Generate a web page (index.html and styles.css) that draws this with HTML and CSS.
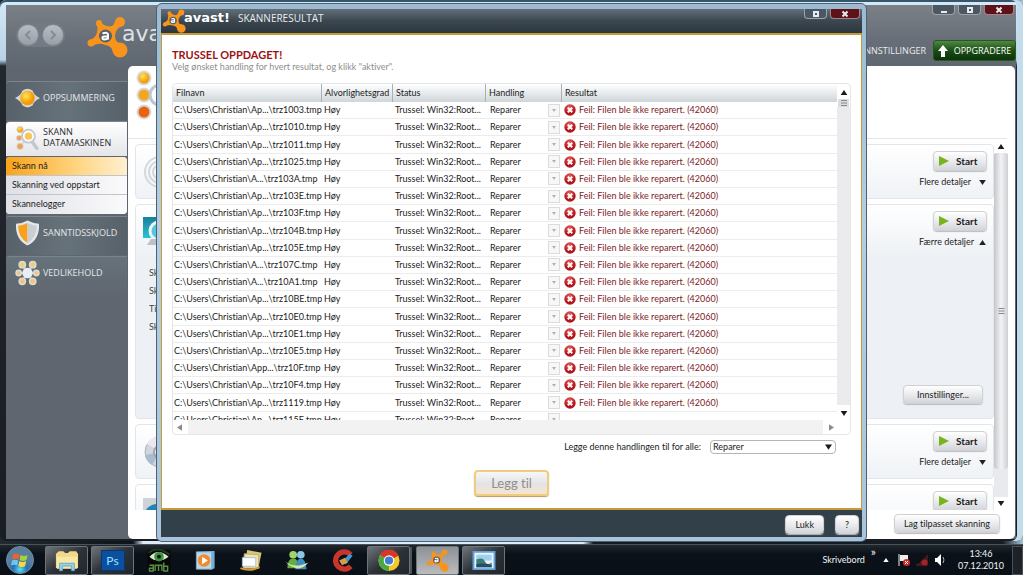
FILE: index.html
```
<!DOCTYPE html>
<html lang="no">
<head>
<meta charset="utf-8">
<title>avast! Skanneresultat</title>
<link rel="stylesheet" href="styles.css">
</head>
<body>
<svg class="defs" aria-hidden="true">
  <defs>
    <radialGradient id="gold" cx="40%" cy="35%"><stop offset="0" stop-color="#ffe45c"/><stop offset="1" stop-color="#f59a00"/></radialGradient>
    <radialGradient id="orb" cx="50%" cy="85%"><stop offset="0" stop-color="#5fe0f5"/><stop offset=".5" stop-color="#2474b4"/><stop offset="1" stop-color="#5a7f9c"/></radialGradient>
    <linearGradient id="lens" x2="0" y2="1"><stop offset="0" stop-color="#19809a"/><stop offset="1" stop-color="#2bc3d6"/></linearGradient>
    <radialGradient id="alert" cx="45%" cy="30%"><stop offset="0" stop-color="#ee6a66"/><stop offset="1" stop-color="#b3151c"/></radialGradient>
  </defs>
  <symbol id="splat" viewBox="0 0 42 42">
    <g fill="#f7941d">
      <circle cx="33" cy="6" r="5"/><circle cx="12" cy="7" r="3"/><circle cx="4" cy="27" r="3.500"/><circle cx="33" cy="34" r="7.500"/>
      <path d="M28 5Q27 12 20 10Q15 9 14 5L9 8Q12 13 9 19Q7 23 2 24L4 30.500Q11 26 18 29Q25 30 26 36L38 28.500Q28 28 28 20Q28 12 37 9Z"/>
    </g>
    <circle cx="18.500" cy="20" r="6.500" fill="#596069"/>
    <path d="M15.500 17.500q5.500-2 5.500 1.500v4.500m0-3h-3.500q-2.500 0-2 2t5.500 0" fill="none" stroke="#fff" stroke-width="2"/>
  </symbol>
  <symbol id="scan" viewBox="0 0 26 28">
    <path d="M5 5L13 13L5 23M4 14h9" stroke="#d8d9dc" stroke-width="2" fill="none"/>
    <g stroke="#ddd8cd"><circle cx="5" cy="5" r="3.500" fill="url(#gold)"/><circle cx="4" cy="14" r="3" fill="#eaa25e"/><circle cx="5" cy="23" r="3.500" fill="#eaa25e"/></g>
    <path d="M18 18l5 7" stroke="#c4c8ce" stroke-width="4" stroke-linecap="round"/>
    <circle cx="14" cy="12" r="7" fill="#fff" stroke="#c4c8ce" stroke-width="2"/><circle cx="14" cy="12" r="4" fill="#f7c75c"/>
  </symbol>
  <symbol id="error" viewBox="0 0 12 12"><circle cx="6" cy="6" r="5.700" fill="url(#alert)"/><path d="M3.800 3.800l4.400 4.400m0-4.400L3.800 8.200" stroke="#fff" stroke-width="2"/></symbol>
  <symbol id="play" viewBox="0 0 10 10"><path d="M0 0L10 5L0 10Z" fill="#78b41e"/></symbol>
  <symbol id="down" viewBox="0 0 8 6"><path d="M0 0H8L4 6Z" fill="currentColor"/></symbol>
  <symbol id="up" viewBox="0 0 8 6"><path d="M0 6H8L4 0Z" fill="currentColor"/></symbol>
  <symbol id="left" viewBox="0 0 6 8"><path d="M6 0V8L0 4Z" fill="currentColor"/></symbol>
  <symbol id="right" viewBox="0 0 6 8"><path d="M0 0V8L6 4Z" fill="currentColor"/></symbol>
  <symbol id="grip" viewBox="0 0 6 6"><path d="M0 .5H6M0 3H6M0 5.500H6" stroke="#888"/></symbol>
</svg>

<main class="desktop">
  <section class="app" aria-label="avast!">
    <header class="app-header">
      <div class="nav">
        <button class="nav-button" aria-label="Tilbake"><svg viewBox="0 0 10 10"><path d="M7 1L3 5l4 4"/></svg></button>
        <button class="nav-button" aria-label="Frem"><svg viewBox="0 0 10 10"><path d="M3 1l4 4-4 4"/></svg></button>
      </div>
      <svg class="brand-logo"><use href="#splat"/></svg>
      <span class="brand">avast!</span>
      <div class="app-tools">
        <div class="caption-buttons">
          <button class="caption" aria-label="Minimer"><svg viewBox="0 0 8 8"><path d="M1 6h6"/></svg></button>
          <button class="caption" aria-label="Maksimer"><svg viewBox="0 0 8 8"><path d="M2 2h4v4H2z"/></svg></button>
          <button class="caption close" aria-label="Lukk vindu"><svg viewBox="0 0 8 8"><path d="M1.500 1.500l5 5m0-5l-5 5"/></svg></button>
        </div>
        <div class="app-links">
          <a href="#">INNSTILLINGER</a>
          <button class="upgrade"><svg viewBox="0 0 10 12"><path d="M5 0L10 6H7v6H3V6H0Z" fill="#fff"/></svg>OPPGRADERE</button>
        </div>
      </div>
    </header>
    <div class="app-body">
      <nav class="sidebar">
        <a class="side-item" href="#"><svg viewBox="0 0 24 18"><path d="M0 9Q6 6 7 2Q12-2 17 2Q18 6 24 9Q18 12 17 16Q12 20 7 16Q6 12 0 9Z" fill="#d4d7d9"/><circle cx="12" cy="9" r="7" fill="url(#gold)"/></svg>OPPSUMMERING</a>
        <a class="side-item active" href="#"><svg><use href="#scan"/></svg>SKANN<br>DATAMASKINEN</a>
        <div class="submenu">
          <a class="current" href="#">Skann nå</a>
          <a href="#">Skanning ved oppstart</a>
          <a href="#">Skannelogger</a>
        </div>
        <a class="side-item" href="#"><svg viewBox="0 0 24 24"><path d="M12 0Q18 3 23 3Q24 18 12 24Q0 18 1 3Q7 3 12 0Z" fill="#e4e6e8"/><path d="M12 2.500Q7 5 3 5Q3 16 12 21.500Z" fill="#f9a11b"/><path d="M12 2.500Q17 5 21 5Q21 16 12 21.500Z" fill="#c9ced3"/></svg>SANNTIDSSKJOLD</a>
        <a class="side-item last" href="#"><svg viewBox="0 0 24 24"><path d="M7 4l10 16M17 4L7 20M3 12h18" stroke="#c7c4bb" stroke-width="2"/><g fill="#f3c27c" stroke="#dedad0" stroke-width="1.500"><circle cx="7" cy="4" r="3" fill="#e9d27a"/><circle cx="17" cy="4" r="3" fill="#e9d27a"/><circle cx="3.500" cy="12" r="2.500"/><circle cx="20.500" cy="12" r="2.500"/><circle cx="7" cy="20" r="3"/><circle cx="17" cy="20" r="3"/></g><circle cx="12" cy="12" r="5" fill="#e8eef6"/></svg>VEDLIKEHOLD</a>
      </nav>
      <div class="panel">
        <div class="panel-top">
          <svg viewBox="0 0 34 50"><g stroke="#d6d9de" stroke-width="2"><circle cx="8" cy="8" r="6.500" fill="url(#gold)"/><circle cx="8" cy="25" r="6.500" fill="#f4a71e"/><circle cx="8" cy="42" r="6.500" fill="#e8640c"/></g><circle cx="24" cy="25" r="10" fill="#fff" stroke="#bcc6d4" stroke-width="3"/></svg>
        </div>
        <div class="panel-main">
          <div class="cards">
            <article class="card short">
              <svg class="card-icon" viewBox="0 0 34 34"><g fill="none" stroke="#d4d8dc" stroke-width="2"><circle cx="17" cy="17" r="15"/><circle cx="17" cy="17" r="11"/><circle cx="17" cy="17" r="7"/></g></svg>
              <div class="card-actions"><button class="button start"><svg><use href="#play"/></svg>Start</button><a href="#">Flere detaljer <svg><use href="#down"/></svg></a></div>
            </article>
            <article class="card open">
              <svg class="card-icon" viewBox="0 0 34 34"><path d="M0 2H30V23H0Z" fill="url(#lens)"/><circle cx="16" cy="16" r="9" fill="#56c7dc" stroke="#eef3f6" stroke-width="3"/><path d="M8 24h18l4 6H4z" fill="#b9c2ca"/></svg>
              <div class="card-facts"><span>Sk</span><span>Sk</span><span>Ti</span><span>Sk</span></div>
              <div class="card-actions"><button class="button start"><svg><use href="#play"/></svg>Start</button><a class="less" href="#">Færre detaljer <svg><use href="#up"/></svg></a></div>
              <button class="button settings">Innstillinger...</button>
            </article>
            <article class="card short">
              <svg class="card-icon" viewBox="0 0 34 34"><circle cx="17" cy="17" r="15" fill="#cfd6dd" stroke="#aab3bd"/><path d="M17 17L4 9A15 15 0 0 1 13 2Z" fill="#f0e6ee"/><path d="M17 17L2 20A15 15 0 0 0 9 30Z" fill="#a9bccb"/><circle cx="17" cy="17" r="6" fill="#eef1f4" stroke="#a59fb5" stroke-width="2"/></svg>
              <div class="card-actions"><button class="button start"><svg><use href="#play"/></svg>Start</button><a href="#">Flere detaljer <svg><use href="#down"/></svg></a></div>
            </article>
            <article class="card cut">
              <svg class="card-icon" viewBox="0 0 34 34"><path d="M0 3H24V30H0Z" fill="#cfd3d7"/><circle cx="14" cy="22" r="13" fill="#1d88b0"/><circle cx="17" cy="23" r="8" fill="#d4f0f7"/></svg>
              <div class="card-actions"><button class="button start"><svg><use href="#play"/></svg>Start</button></div>
            </article>
          </div>
          <div class="scrollbar">
            <svg class="tip"><use href="#up"/></svg>
            <div class="thumb"><svg><use href="#grip"/></svg></div>
            <div class="rest"></div>
            <svg class="tip"><use href="#down"/></svg>
          </div>
        </div>
        <footer class="panel-footer"><button class="button">Lag tilpasset skanning</button></footer>
      </div>
    </div>
  </section>

  <section class="dialog" role="dialog" aria-labelledby="dialog-title">
    <header class="dialog-header">
      <svg class="dialog-logo"><use href="#splat"/></svg>
      <span class="dialog-brand">avast!</span>
      <h1 id="dialog-title">SKANNERESULTAT</h1>
      <div class="caption-buttons">
        <button class="caption" aria-label="Maksimer"><svg viewBox="0 0 8 8"><path d="M2 2h4v4H2z"/></svg></button>
        <button class="caption close" aria-label="Lukk dialog"><svg viewBox="0 0 8 8"><path d="M1.500 1.500l5 5m0-5l-5 5"/></svg></button>
      </div>
    </header>
    <div class="dialog-body">
      <h2>TRUSSEL OPPDAGET!</h2>
      <p class="hint">Velg ønsket handling for hvert resultat, og klikk "aktiver".</p>
      <div class="results">
        <div class="results-view">
          <table>
            <colgroup><col class="c-file"><col class="c-risk"><col class="c-status"><col class="c-action"><col></colgroup>
            <thead><tr><th>Filnavn</th><th>Alvorlighetsgrad</th><th>Status</th><th>Handling</th><th>Resultat</th></tr></thead>
            <tbody id="rows"></tbody>
          </table>
        </div>
        <div class="v-scroll">
          <svg class="tip"><use href="#up"/></svg>
          <div class="mini-thumb"><svg><use href="#grip"/></svg></div>
          <div class="rest"></div>
          <svg class="tip"><use href="#down"/></svg>
        </div>
        <div class="h-scroll"><svg><use href="#left"/></svg><div></div><svg><use href="#right"/></svg></div>
      </div>
      <div class="apply-all">
        <label for="all">Legge denne handlingen til for alle:</label>
        <span class="picker"><select id="all"><option>Reparer</option></select><svg><use href="#down"/></svg></span>
      </div>
      <button class="apply" disabled>Legg til</button>
    </div>
    <footer class="dialog-footer"><button class="button">Lukk</button><button class="button">?</button></footer>
  </section>
</main>

<footer class="taskbar">
  <button class="orb" aria-label="Start"><svg viewBox="0 0 28 28"><circle cx="14" cy="14" r="13.500" fill="url(#orb)" stroke="#6f8da3"/><path d="M7 8.500Q10 6.500 13.500 8.500L12.500 13.500Q9.500 12 6 13.500Z" fill="#f0602c"/><path d="M14.500 9Q18 11 21.500 9L20.500 14Q17 16 13.500 14Z" fill="#a6d23c"/><path d="M6 14.500Q9 13 12.300 14.500L11.300 19.500Q8 18 5 19.500Z" fill="#6fc4f0"/><path d="M13.300 15Q17 17 20.200 15L19.200 20Q16 22 12.300 20Z" fill="#ffd63d"/></svg></button>
  <div class="tasks">
    <button class="task open" aria-label="Utforsker"><svg viewBox="0 0 26 24"><path d="M1 5l3-3h5l2 2h3l2-2h7l2 3v15H1z" fill="#f3d985"/><path d="M2 8h22v13H2z" fill="#f8e7a5"/><path d="M5 15h16v8h-3v-5H8v5H5z" fill="#9bd0ea" stroke="#5fa7cc"/></svg></button>
    <button class="task open ps"><span>Ps</span></button>
    <button class="task" aria-label="AMB"><svg viewBox="0 0 24 24"><path d="M0 1h24v23H0z" fill="#060907"/><path d="M2 8Q11-2 22 8Q11 16 2 8Z" fill="#d8e8c8"/><circle cx="12" cy="8" r="5" fill="#3f9142"/><circle cx="12" cy="8" r="2" fill="#051005"/><path d="M1 4Q11-4 23 6" fill="none" stroke="#223822" stroke-width="2"/><path d="M2 17h4v6H2v-3h4M8 23v-6h7v6m-3.500 0v-6M17 14v9h4v-5h-4" fill="none" stroke="#5b8d46" stroke-width="1.500"/></svg></button>
    <button class="task" aria-label="Media Player"><svg viewBox="0 0 24 24"><path d="M5 2h17v18l-4 2V3z" fill="#6fb1da"/><path d="M3 3h16v18H3z" fill="#b8d9ec" stroke="#87aac0"/><circle cx="11" cy="12" r="6.500" fill="#ef8a2e"/><path d="M9 8l6 4-6 4z" fill="#fff"/></svg></button>
    <button class="task" aria-label="E-post"><svg viewBox="0 0 24 24"><path d="M8 1l15 3-3 14-14-3z" fill="#d8c774"/><path d="M5 5l15 1v14H4z" fill="#eee4b7" stroke="#c0ab6b"/><path d="M3 9h14v9H3z" fill="#fff" stroke="#a9c0d5"/><path d="M1 20q9 4 20-1" stroke="#d9982c" stroke-width="2" fill="none"/></svg></button>
    <button class="task" aria-label="Messenger"><svg viewBox="0 0 24 24"><circle cx="8" cy="6" r="4" fill="#a4d36a"/><path d="M2 20q0-10 6-10t6 10z" fill="#65ad43"/><circle cx="16" cy="6" r="4" fill="#8ac6ea"/><path d="M10 21q1-11 6-11t6 11z" fill="#3c8fc4"/><path d="M0 13q9 8 24 1-8 9-15 5Q4 18 0 13Z" fill="#dde5a4"/></svg></button>
    <button class="task" aria-label="CCleaner"><svg viewBox="0 0 24 24"><path d="M20 6A9 9 0 1 0 20 18" fill="none" stroke="#c9352b" stroke-width="5.500"/><path d="M11 13l8-8 3 2-7 9z" fill="#3e9ad3"/><path d="M8 12l6-3 3 5-6 3z" fill="#d99b44"/></svg></button>
    <button class="task open stacked" aria-label="Chrome"><svg viewBox="0 0 24 24"><circle cx="12" cy="12" r="11" fill="#f6c928"/><path d="M12 12L2.500 6.500A11 11 0 0 1 22 7Z" fill="#d93627"/><path d="M12 12L2.500 6.500A11 11 0 0 0 12 23Z" fill="#4da744"/><circle cx="12" cy="12" r="5.500" fill="#fff"/><circle cx="12" cy="12" r="4.300" fill="#3c7fd0"/></svg></button>
    <button class="task open bright" aria-label="avast!"><svg><use href="#splat"/></svg></button>
    <button class="task open" aria-label="Bilder"><svg viewBox="0 0 24 24"><path d="M1 3h22v18H1z" fill="#e8f2f8" stroke="#5fa0d8" stroke-width="2"/><path d="M4 6h16v6H4z" fill="#9fd0ef"/><path d="M4 11q7-3 9 2t7 1v5H4z" fill="#397c75"/><path d="M4 16q8-2 16 1v2H4z" fill="#234d6b"/></svg></button>
  </div>
  <div class="tray">
    <span class="toolbar-name">Skrivebord</span><span class="more">»</span>
    <svg class="tray-up" viewBox="0 0 8 6"><path d="M0 6H8L4 0Z" fill="#fff"/></svg>
    <svg viewBox="0 0 12 12"><path d="M1 0v12" stroke="#eee"/><path d="M2 1h8v6H2z" fill="#eee"/><circle cx="8.500" cy="8.500" r="3.500" fill="#cf2b2b"/><path d="M7 7l3 3m0-3l-3 3" stroke="#fff"/></svg>
    <svg viewBox="0 0 12 12"><path d="M1 12v-2m2 2V9m2 3V7m2 5V5m2 7V3m2 9V1" stroke="#7c2226"/><circle cx="8.500" cy="8.500" r="3" fill="#a5222a"/></svg>
    <svg viewBox="0 0 12 12"><path d="M1 4h2l4-4v12L3 8H1z" fill="#fff"/><path d="M9 3q2 3 0 6" stroke="#aaa" fill="none"/></svg>
    <time class="clock" datetime="2010-12-07T13:46">13:46<br>07.12.2010</time>
    <button class="show-desktop" aria-label="Vis skrivebord"></button>
  </div>
</footer>
<script src="rows.js"></script>
</body>
</html>
```
FILE: styles.css
```
* { box-sizing: border-box; }
body {
  margin: 0;
  height: 100vh;
  display: flex;
  flex-direction: column;
  overflow: hidden;
  background: #0c1218;
  color: #1c1c1c;
  font: 9px/12px Lato, "Noto Sans", sans-serif;
  font-variant-ligatures: none;
}
button, select { font: inherit; font-variant-ligatures: none; color: inherit; margin: 0; padding: 0; }
a { color: inherit; text-decoration: none; }
h1, h2, p { margin: 0; font-weight: 400; }
svg { display: block; flex: none; }
.defs { position: absolute; width: 0; height: 0; }

.desktop { position: relative; flex: 1; min-height: 0; background: linear-gradient(90deg, #222a33, #0d141b 13%, #dcebf5 14%, #dcebf5 57%, #151c23 58%, #151c23 98%, #a8c4d6); }

/* main window */
.app {
  position: absolute;
  inset: 0 0 3px 0;
  display: flex;
  flex-direction: column;
  padding: 5px 7px 2px 6px;
  border-radius: 6px;
  background: linear-gradient(180deg, #d5eaf7, #b6d2e4 60px, #23282e 66px, #1a1d22 100%);
  box-shadow: inset -6px 0 0 #c2dceb, inset 0 2px 0 #35566b;
}
.app-header { display: flex; height: 61px; background: linear-gradient(#7b8087, #676e77 60%, #5f6770); }
.nav { display: flex; gap: 3px; margin: 18px 0 0 10px; padding: 1px; height: 24px; border-radius: 12px; background: #737a83; }
.nav-button { width: 22px; height: 22px; border: 1px solid #7f868e; border-radius: 50%; background: linear-gradient(#b8bdc3, #989fa7); display: grid; place-items: center; }
.nav-button svg { width: 10px; height: 10px; fill: none; stroke: #858c95; stroke-width: 2; }
.brand-logo { width: 42px; height: 42px; margin: 11px 0 0 22px; }
.brand { margin: 15px 0 0 -7px; color: #dfe2e5; font: 22px/28px "DejaVu Sans", sans-serif; }
.app-tools { margin-left: auto; display: flex; flex-direction: column; align-items: flex-end; }
.caption-buttons { display: flex; gap: 3px; padding-right: 2px; }
.caption { width: 23px; height: 10px; border: 1px solid #9ba3ab; border-top: 0; border-radius: 0 0 4px 4px; background: #4b5762; display: grid; place-items: center; }
.caption svg { width: 8px; height: 8px; fill: none; stroke: #e8ecef; stroke-width: 2; }
.caption.close { width: 30px; background: #5e1218; border-color: #a48388; }
.app-links { display: flex; align-items: center; gap: 7px; margin-top: 25px; color: #e9ebed; }
.upgrade { display: flex; align-items: center; justify-content: center; gap: 6px; width: 83px; height: 21px; border: 1px solid #27591f; border-radius: 3px; background: linear-gradient(#4f8a43, #1b4d15 50%, #0b3409); color: #fff; }
.upgrade svg { width: 10px; height: 12px; }
.app-links, .side-item, .dialog h1 { font-family: "Open Sans", "Noto Sans", sans-serif; }

.app-body { flex: 1; min-height: 0; display: flex; background: #5f6670; padding-right: 1px; }
.sidebar { width: 121px; margin-right: 1px; padding-top: 15px; }
.side-item { position: relative; display: flow-root; height: 39px; margin-bottom: 1px; padding: 10px 0 0 37px; border-top: 1px solid #7b838b; background: linear-gradient(90deg, #57616a, #66727a 50%, #57616a); color: #e3e6e9; white-space: nowrap; border-radius: 4px 0 0 0; }
.side-item svg { position: absolute; left: 9px; top: 3px; width: 25px; height: 26px; }
.side-item.active { height: 35px; padding-top: 4px; line-height: 11px; background: linear-gradient(#fff, #e4e5ea); color: #2a2a2a; }
.side-item.last { height: 40px; background: linear-gradient(#66727a, #5f6670); }
.submenu { margin: 1px 0 2px; background: #eeeff3; border-radius: 4px; overflow: hidden; }
.submenu a { display: block; height: 19px; padding: 3px 6px; border-bottom: 1px solid #c2c5ca; background: linear-gradient(90deg, #dfe0e6, #fafafc); white-space: nowrap; }
.submenu a:last-child { border-bottom: 0; }
.submenu a.current { background: linear-gradient(90deg, #f9a31a, #ffd684 60%, #fff0d0); }

.panel { flex: 1; min-width: 0; display: flex; flex-direction: column; border-radius: 5px; background: #fff; }
.panel-top { height: 73px; padding: 4px 8px; border-bottom: 1px solid #e3e6e9; margin: 0 8px 5px 0; }
.panel-top svg { width: 34px; height: 50px; }
.panel-main { flex: 1; min-height: 0; display: flex; padding: 0 7px 0 7px; }
.cards { flex: 1; min-width: 0; display: flex; flex-direction: column; gap: 5px; overflow: hidden; }
.card { position: relative; flex: none; display: flex; height: 55px; padding: 6px; border: 1px solid #e2e5e9; border-radius: 4px; background: linear-gradient(#fff, #eff2f6); }
.card.open { height: 215px; background: linear-gradient(#fff, #edf1f5 25%); flex-wrap: wrap; }
.card-icon { width: 34px; height: 34px; margin: 4px 0 0 1px; }
.card-actions { margin-left: auto; display: flex; flex-direction: column; align-items: flex-end; gap: 5px; white-space: nowrap; }
.card-actions a { display: flex; align-items: center; gap: 8px; padding-right: 1px; }
.card-actions a.less { gap: 5px; }
.card-actions a svg { width: 7px; height: 5px; color: #222; }
.card-facts { position: absolute; left: 13px; top: 62px; display: flex; flex-direction: column; gap: 6px; color: #444; }
.button { height: 19px; padding: 0 9px; border: 1px solid #cfd1d4; border-radius: 4px; background: linear-gradient(#fff, #e6e7ea 60%, #d3d5d8); box-shadow: 0 1px 1px #b9bcc0; color: #1c1c1c; white-space: nowrap; }
.start { display: flex; align-items: center; gap: 7px; width: 54px; height: 20px; padding: 0 5px; font-weight: 700; font-size: 10px; }
.start svg { width: 10px; height: 10px; }
.settings { align-self: flex-end; margin: 0 4px 8px auto; width: 80px; }
.card.open .card-actions { width: calc(100% - 35px); }
.panel-footer { display: flex; justify-content: flex-end; padding: 4px 15px 5px; height: 29px; }

.scrollbar { width: 14px; display: flex; flex-direction: column; align-items: center; }
.tip { width: 8px; height: 5px; color: #1c1c1c; margin: 0 0 4px; }
.thumb { flex: 1; align-self: stretch; display: grid; place-items: center; border-radius: 2px; background: linear-gradient(90deg, #c5c6ca, #f3f3f5 50%, #cfd0d4); }
.thumb svg { width: 7px; height: 6px; }
.scrollbar .rest { height: 28px; margin-bottom: 4px; align-self: stretch; background: #e9eaed; }

/* scan result window */
.dialog {
  position: absolute;
  inset: 3px 156px 2px 156px;
  display: flex;
  flex-direction: column;
  padding: 5px 4px 4px;
  border: 1px solid #4a6274;
  border-radius: 6px;
  background: linear-gradient(#9dbad0, #b4cde0 40%, #a9c4da);
}
.dialog-header { display: flex; height: 24px; padding-left: 1px; background: linear-gradient(#626f79, #3b4750 50%, #2c363e); color: #e9edf0; }
.dialog-logo { width: 25px; height: 24px; }
.dialog-brand { font: bold 13px/17px "DejaVu Sans", sans-serif; color: #fff; margin-left: -3px; }
.dialog h1 { margin: 3px 0 0 8px; font-size: 10px; line-height: 12px; }
.dialog-header .caption-buttons { margin-left: auto; }
.dialog-body { flex: 1; min-height: 0; display: flex; flex-direction: column; padding: 13px 10px 12px; border: solid #c69a35; border-width: 2px 1px; background: #fff; }
.dialog h2 { color: #9c1214; font-size: 11px; line-height: 13px; font-weight: 700; }
.hint { color: #8e8e8e; }
.results { flex: 1; min-height: 0; display: grid; grid-template: 1fr 14px / 1fr 13px; margin-top: 10px; border: 1px solid #e3e5e7; border-radius: 4px; overflow: hidden; }
.results-view { overflow: hidden; min-height: 0; }
table { width: 100%; height: 345px; table-layout: fixed; border-collapse: separate; border-spacing: 0; white-space: nowrap; }
th { height: 18px; padding: 0 3px; text-align: left; font-weight: 400; background: linear-gradient(#fff, #e7ebed 50%, #cfd5d8); border-right: 1px solid #a9afb3; }
th:last-child { border-right: 0; }
td { padding: 0 2px; border-bottom: 1px solid #ececec; overflow: hidden; }
.c-file { width: 149px; } .c-risk { width: 71px; } .c-status { width: 93px; } .c-action { width: 76px; }
td:first-child { padding: 0 0 0 1px; }
.picker { display: grid; align-items: center; }
.picker > * { grid-area: 1 / 1; }
.picker select { appearance: none; border: 0; background: transparent; height: 14px; padding-left: 2px; }
.picker svg { justify-self: end; pointer-events: none; }
td .picker svg { width: 12px; height: 13px; padding: 4px 3px; border: 1px solid #dcdcdc; background: #f7f7f7; color: #b3b3b3; }
.outcome { display: flex; align-items: center; gap: 3px; color: #7e1a1f; }
.outcome svg { width: 12px; height: 12px; }
.v-scroll { display: flex; flex-direction: column; align-items: center; }
.v-scroll .tip { margin: 6px 0 4px; }
.mini-thumb { width: 11px; height: 8px; background: #dcdde0; display: grid; place-items: center; }
.mini-thumb svg { width: 6px; height: 6px; }
.v-scroll .rest { flex: 1; align-self: stretch; background: #ebebee; }
.h-scroll { grid-column: 1 / -1; display: flex; align-items: center; gap: 6px; padding: 0 16px 0 4px; color: #8b8b8b; }
.h-scroll svg { width: 5px; height: 7px; }
.h-scroll div { flex: 1; height: 14px; background: #f2f2f2; }
.apply-all { display: flex; justify-content: flex-end; align-items: center; gap: 9px; margin: 5px 15px 0 0; }
.apply-all .picker { width: 126px; }
.apply-all select { width: 126px; height: 14px; border: 1px solid #b4b4b4; border-radius: 4px; background: #fff; }
.apply-all svg { width: 7px; height: 6px; margin-right: 4px; }
.apply { align-self: center; margin-top: 16px; width: 75px; height: 26px; border: 2px solid #efcd80; border-radius: 4px; background: linear-gradient(#f7f7f7, #e3e3e6 55%, #f7e5d0); box-shadow: 0 1px 1px #b79a66; color: #8f8f8f; font-size: 13px; }
.dialog-footer { display: flex; justify-content: flex-end; gap: 11px; height: 27px; padding: 5px 3px 0; background: #32404a; }

/* taskbar */
.taskbar { flex: none; display: flex; align-items: center; height: 31px; border-top: 1px solid #4a525a; background: linear-gradient(#20272d, #0b1118 30%, #0a1017); color: #f1f3f5; }
.orb { width: 28px; height: 28px; margin-left: 6px; border: 0; background: none; }
.tasks { display: flex; gap: 3px; margin-left: 11px; }
.task { display: grid; place-items: center; width: 43px; height: 29px; border: 1px solid transparent; border-radius: 2px; background: none; }
.task svg { width: 24px; height: 23px; }
.task.open { border-color: #6e747b; background: linear-gradient(145deg, #70757b, #2c3238 50%, #20262c); }
.task.bright { background: linear-gradient(#8e9195, #b9bbbd); }
.task.stacked { margin-right: 3px; box-shadow: 3px 0 0 -1px #4c535a; }
.ps span { width: 24px; height: 21px; background: #0a4fa0; border: 1px solid #0b3670; color: #9fe0ff; font-size: 12px; line-height: 19px; }
.tray { margin-left: auto; display: flex; align-items: center; gap: 6px; height: 100%; }
.tray svg { width: 12px; height: 12px; }
.tray .tray-up { width: 6px; height: 4px; margin: 0 3px 0 1px; }
.more { align-self: flex-start; font-size: 12px; line-height: 14px; }
.clock { width: 50px; text-align: center; margin-left: 4px; }
.show-desktop { width: 11px; height: 29px; border: 1px solid #4a5157; background: #1c2228; }
```
FILE: rows.js
```
const files = [
  "Ap...\\trz1003", "Ap...\\trz1010", "Ap...\\trz1011", "Ap...\\trz1025", "A...\\trz103A",
  "Ap...\\trz103E", "Ap...\\trz103F", "Ap...\\trz104B", "Ap...\\trz105E", "A...\\trz107C",
  "A...\\trz10A1", "Ap...\\trz10BE", "Ap...\\trz10E0", "Ap...\\trz10E1", "Ap...\\trz10E5",
  "App...\\trz10F", "Ap...\\trz10F4", "Ap...\\trz1119", "Ap...\\trz115E"
];
const outcome = `<span class="outcome"><svg><use href="#error"/></svg>Feil: Filen ble ikke reparert. (42060)</span>`;
document.getElementById("rows").innerHTML = files.map((file, i) => `
  <tr>
    <td>C:\\Users\\Christian\\${file}.tmp</td>
    <td>Høy</td>
    <td>Trussel: Win32:Root...</td>
    <td><span class="picker"><select aria-label="Handling"><option>Reparer</option></select><svg><use href="#down"/></svg></span></td>
    <td>${i < files.length - 1 ? outcome : ""}</td>
  </tr>`).join("");
```
